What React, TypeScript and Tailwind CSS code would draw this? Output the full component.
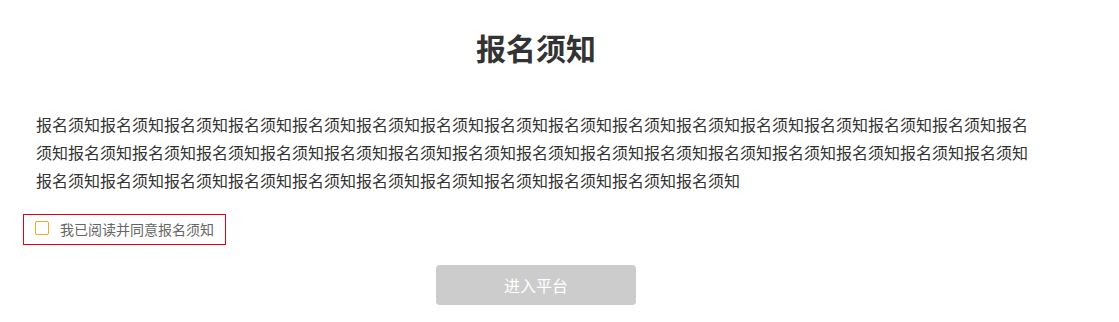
export default function App() {
  const body = "报名须知".repeat(42);

  return (
    <div className="min-h-screen bg-white font-['Microsoft_YaHei','Noto_Sans_CJK_SC',sans-serif] text-[#333]">
      <div className="ml-[36px] w-[1000px]">
        <h1 className="pt-[27px] text-center text-[30px] font-bold leading-[40px] text-[#333]">报名须知</h1>
        <p className="mt-[43px] break-all text-[16px] leading-[28px] text-[#333]">{body}</p>
        <label className="ml-[-13px] mt-[20px] flex h-[31px] w-[203px] items-center border border-[#e60012] pl-[11px]">
          <span className="mt-[-3px] h-[14px] w-[14px] shrink-0 rounded-[2px] border border-[#f5a623] bg-white" />
          <span className="ml-[11px] whitespace-nowrap text-[14px] text-[#666]">我已阅读并同意报名须知</span>
        </label>
        <div className="mt-[20px] flex justify-center">
          <button className="h-[40px] w-[200px] rounded-[4px] bg-[#cccccc] text-[16px] text-white">进入平台</button>
        </div>
      </div>
    </div>
  );
}
